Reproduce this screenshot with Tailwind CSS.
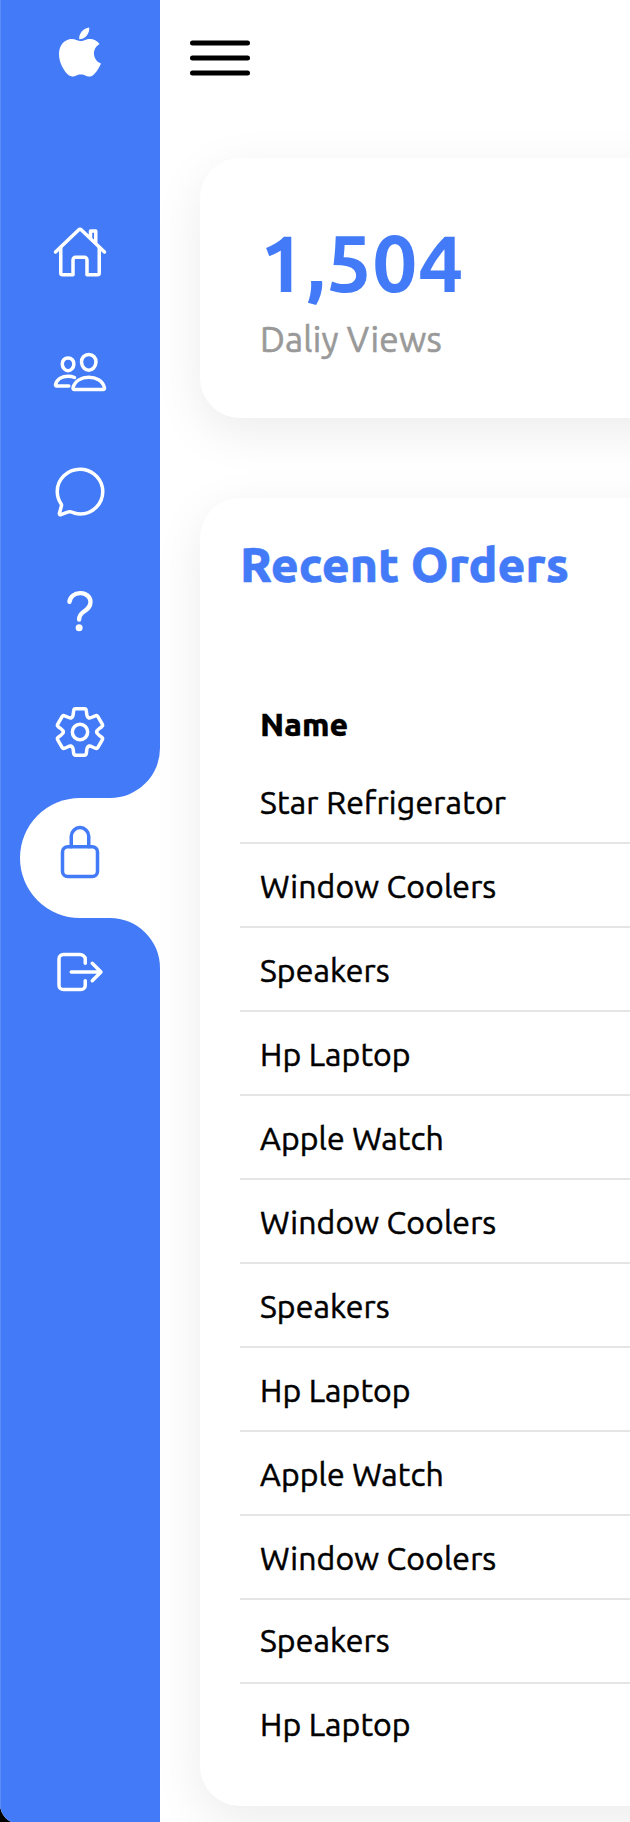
<!DOCTYPE html>
<html lang="en">
<head>
<meta charset="utf-8">
<title>Dashboard</title>
<script src="https://cdn.jsdelivr.net/npm/@tailwindcss/browser@4"></script>
</head>
<body class="bg-black font-['Ubuntu','Noto_Sans',sans-serif] text-black">
<div class="h-[1822px] overflow-hidden">
<div class="flex h-[1824px] w-[630px] overflow-hidden rounded-bl-[20px] bg-white">
  <nav class="relative z-10 flex w-40 shrink-0 flex-col border-l border-[#5c8cf7] bg-[#427af7] text-white">
    <a class="mb-[88px] flex h-[104px] items-center justify-center pr-px"><svg class="size-14" viewBox="0 0 512 512" fill="currentColor"><path d="M349.13 136.86c-40.32 0-57.36 19.24-85.44 19.24-28.79 0-50.75-19.1-85.69-19.1-34.2 0-70.67 20.88-93.83 56.45-32.52 50.16-27 144.63 25.67 225.11 18.84 28.81 44 61.12 77 61.47h.6c28.68 0 37.2-18.78 76.67-19h.6c38.88 0 46.68 18.89 75.24 18.89h.6c33-.35 59.51-36.15 78.35-64.85 13.56-20.64 18.6-31 29-54.35-76.19-28.92-88.43-136.93-13.08-178.34-23-28.8-55.32-45.48-85.79-45.48z"/><path d="M340.25 32c-24 1.63-52 16.91-68.4 36.86-14.88 18.08-27.12 44.9-22.32 70.91h1.92c25.56 0 51.72-15.39 67-35.11 14.72-18.77 25.88-45.37 21.8-72.66z"/></svg></a>
    <a class="flex h-[120px] items-center justify-center pr-px"><svg class="size-14" viewBox="0 0 512 512" fill="none" stroke="currentColor" stroke-width="32" stroke-linecap="round" stroke-linejoin="round"><path d="M80 212v236a16 16 0 0016 16h96V328a24 24 0 0124-24h80a24 24 0 0124 24v136h96a16 16 0 0016-16V212"/><path d="M480 256L266.89 52c-5-5.28-16.69-5.34-21.78 0L32 256M400 179V64h-48v69"/></svg></a>
    <a class="flex h-[120px] items-center justify-center pr-px"><svg class="size-14" viewBox="0 0 512 512" fill="none" stroke="currentColor" stroke-width="32" stroke-linecap="round" stroke-linejoin="round"><path d="M402 168c-2.93 40.67-33.1 72-66 72s-63.12-31.32-66-72c-3-42.31 26.37-72 66-72s69 30.46 66 72z"/><path d="M336 304c-65.17 0-127.84 32.37-143.54 95.41-2.08 8.34 3.15 16.59 11.72 16.59h263.65c8.57 0 13.77-8.25 11.72-16.59C463.85 335.36 401.18 304 336 304z"/><path d="M200 185.94c-2.34 32.48-26.72 58.06-53 58.06s-50.7-25.57-53-58.06C91.61 152.15 115.34 128 147 128s55.39 24.77 53 57.94z"/><path d="M206 306c-18.05-8.27-37.93-11.45-59-11.45-52 0-102.1 25.85-114.65 76.2-1.65 6.66 2.53 13.25 9.37 13.25H154"/></svg></a>
    <a class="flex h-[120px] items-center justify-center pr-px"><svg class="size-14" viewBox="0 0 512 512" fill="none" stroke="currentColor" stroke-width="32" stroke-linecap="round" stroke-linejoin="round"><path d="M87.49 380c1.19-4.38-1.44-10.47-3.95-14.86a44.86 44.86 0 00-2.54-3.8 199.81 199.81 0 01-33-110C47.65 139.09 140.73 48 255.83 48 356.21 48 440 117.54 459.58 209.85a199 199 0 014.42 41.64c0 112.41-89.49 204.93-204.59 204.93-18.3 0-43-4.6-56.47-8.37s-26.92-8.77-30.39-10.11a31.09 31.09 0 00-11.12-2.07 30.71 30.71 0 00-12.09 2.43l-67.83 24.48a16 16 0 01-4.67 1.22 9.6 9.6 0 01-9.57-9.74 15.85 15.85 0 01.6-3.29z"/></svg></a>
    <a class="flex h-[120px] items-center justify-center pr-px"><svg class="size-14" viewBox="0 0 512 512" fill="none" stroke="currentColor" stroke-width="40" stroke-linecap="round" stroke-linejoin="round"><path d="M160 164s1.44-33 33.54-59.46C212.6 88.83 235.49 84.28 256 84c18.73-.23 35.47 2.94 45.48 7.82C318.59 100.2 352 120.6 352 164c0 45.67-29.18 66.37-62.35 89.18S248 298.36 248 324"/><circle cx="248" cy="400" r="32" fill="currentColor" stroke="none"/></svg></a>
    <a class="flex h-[120px] items-center justify-center pr-px"><svg class="size-14" viewBox="0 0 512 512" fill="none" stroke="currentColor" stroke-width="32" stroke-linecap="round" stroke-linejoin="round"><circle cx="256" cy="256" r="70"/><g transform="translate(256 256)"><path id="tooth" d="M-76-132C-58-142-64-160-58-195Q-56-212-40-212H40Q56-212 58-195C64-160 58-142 76-132"/><use href="#tooth" transform="rotate(60)"/><use href="#tooth" transform="rotate(120)"/><use href="#tooth" transform="rotate(180)"/><use href="#tooth" transform="rotate(240)"/><use href="#tooth" transform="rotate(300)"/></g></svg></a>
    <a class="relative mt-[6px] -mb-[6px] ml-[19px] flex h-[120px] items-center justify-center rounded-l-[60px] bg-white pr-5 pb-3 text-[#427af7]">
      <span class="absolute -top-[50px] right-0 size-[50px] bg-white"><span class="block size-full rounded-br-full bg-[#427af7]"></span></span>
      <svg class="size-14" viewBox="0 0 512 512" fill="none" stroke="currentColor" stroke-width="32" stroke-linecap="round" stroke-linejoin="round"><path d="M336 208v-95a80 80 0 00-160 0v95"/><rect x="96" y="208" width="320" height="272" rx="48"/></svg>
      <span class="absolute -bottom-[50px] right-0 size-[50px] bg-white"><span class="block size-full rounded-tr-full bg-[#427af7]"></span></span>
    </a>
    <a class="relative flex h-[120px] items-center justify-center pr-px"><svg class="size-14" viewBox="0 0 512 512" fill="none" stroke="currentColor" stroke-width="32" stroke-linecap="round" stroke-linejoin="round"><path d="M304 336v40a40 40 0 01-40 40H104a40 40 0 01-40-40V136a40 40 0 0140-40h152c22.09 0 48 17.91 48 40v40M368 336l80-80-80-80M176 256h256"/></svg></a>
  </nav>
  <main class="flex w-[470px] shrink-0 flex-col">
    <header class="flex h-[158px] items-start pt-[18px] pl-5"><svg class="size-20" viewBox="0 0 512 512" fill="none" stroke="currentColor" stroke-width="32" stroke-linecap="round"><path d="M80 160h352M80 256h352M80 352h352"/></svg></header>
    <section class="ml-10 h-[260px] w-[600px] shrink-0 rounded-[40px] bg-white pt-[58px] pl-[60px] shadow-[0_14px_50px_rgba(0,0,0,0.08)]">
      <div class="h-[93px] text-[80px] leading-[92px] font-semibold tracking-[0.8px] text-[#427af7]">1,504</div>
      <div class="h-[44px] text-[35.2px] leading-[60px] tracking-[0.2px] text-[#999] [-webkit-text-stroke:0.6px_#999]">Daliy Views</div>
    </section>
    <section class="mt-20 ml-10 h-[1308px] w-[600px] shrink-0 rounded-[40px] bg-white pt-[39px] pl-10 shadow-[0_14px_50px_rgba(0,0,0,0.08)]">
      <h2 class="h-[145px] text-[48px] leading-[54px] font-extrabold text-[#427af7] [-webkit-text-stroke:0.5px_#427af7]">Recent Orders</h2>
      <div class="h-[80px] pl-5 text-[32px] leading-[84px] font-extrabold [-webkit-text-stroke:0.3px_#000]">Name</div>
      <ul class="text-[32px] leading-[84px] tracking-[0.1px] [-webkit-text-stroke:0.5px_#000]">
        <li class="h-[82px] border-b-2 border-[#e5e5e5] pl-5 leading-[80px] tracking-[0.2px]">Star Refrigerator</li>
        <li class="h-[84px] border-b-2 border-[#e5e5e5] pl-5">Window Coolers</li>
        <li class="h-[84px] border-b-2 border-[#e5e5e5] pl-5">Speakers</li>
        <li class="h-[84px] border-b-2 border-[#e5e5e5] pl-5">Hp Laptop</li>
        <li class="h-[84px] border-b-2 border-[#e5e5e5] pl-5">Apple Watch</li>
        <li class="h-[84px] border-b-2 border-[#e5e5e5] pl-5">Window Coolers</li>
        <li class="h-[84px] border-b-2 border-[#e5e5e5] pl-5">Speakers</li>
        <li class="h-[84px] border-b-2 border-[#e5e5e5] pl-5">Hp Laptop</li>
        <li class="h-[84px] border-b-2 border-[#e5e5e5] pl-5">Apple Watch</li>
        <li class="h-[84px] border-b-2 border-[#e5e5e5] pl-5">Window Coolers</li>
        <li class="h-[84px] border-b-2 border-[#e5e5e5] pl-5 leading-[80px]">Speakers</li>
        <li class="h-[84px] pl-5 leading-[80px]">Hp Laptop</li>
      </ul>
    </section>
  </main>
</div>
</div>
</body>
</html>
